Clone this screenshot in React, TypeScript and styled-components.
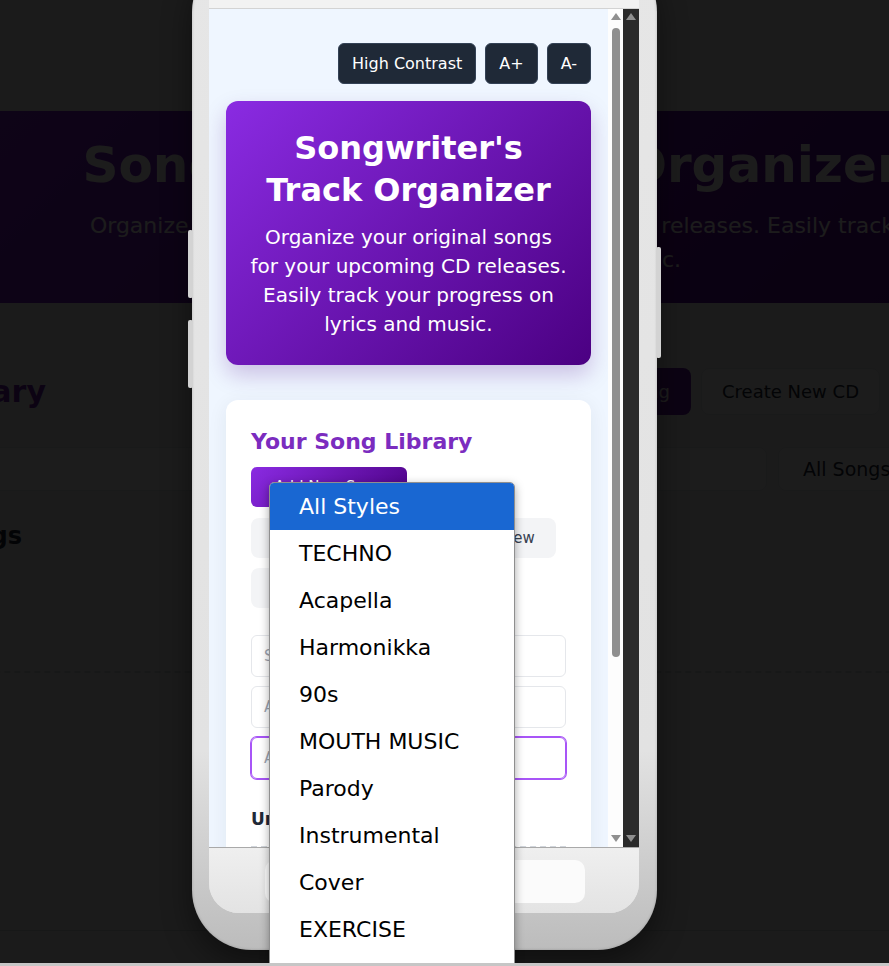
import React from "react";
import styled, { createGlobalStyle } from "styled-components";

const GlobalStyle = createGlobalStyle`
  html, body { margin: 0; padding: 0; background: #1b1b1b; }
  body { font-family: "DejaVu Sans", "Noto Sans", sans-serif; overflow: hidden; }
  *, *::before, *::after { box-sizing: border-box; }
  button, input, select { font-family: inherit; }
`;

const Stage = styled.div`
  width: 889px;
  height: 966px;
  display: flex;
  flex-direction: column;
  overflow: hidden;
`;

const Window = styled.div`
  position: relative;
  flex: 1;
  overflow: hidden;
`;

const HScrollbar = styled.div`
  height: 3px;
  background: #c6c6c6;
`;

/* the desktop page sitting behind the preview overlay */
const BgPage = styled.div`
  width: 1500px;
  margin-left: -258px;
  min-height: 100%;
  background: #f5f5f5;
  color: #1f2937;
`;

const BgTopBar = styled.div`
  height: 111px;
`;

const BgHeader = styled.header`
  height: 192px;
  padding-top: 24px;
  text-align: center;
  color: #fff;
  background: linear-gradient(135deg, #8a2be2 0%, #4b0082 100%);
`;

const BgTitle = styled.h1`
  margin: 0;
  font-size: 50px;
  line-height: 60px;
  font-weight: 700;
`;

const BgLead = styled.p`
  margin: 14px auto 0;
  max-width: 850px;
  font-size: 22px;
  line-height: 34px;
`;

const BgMain = styled.main`
  padding: 65px 0 0 2px;
`;

const BgSectionHead = styled.div`
  width: 1136px;
  display: flex;
  align-items: center;
  justify-content: space-between;
`;

const BgHeading = styled.h2`
  margin: 0;
  font-size: 30px;
  color: #6b21a8;
`;

const BgActions = styled.div`
  display: flex;
  gap: 10px;
`;

const BgButton = styled.button<{ $primary?: boolean }>`
  height: 47px;
  padding: 0 20px;
  border-radius: 8px;
  font-size: 18px;
  border: 1px solid ${(p) => (p.$primary ? "transparent" : "#e5e7eb")};
  background: ${(p) => (p.$primary ? "#6b21a8" : "#f9fafb")};
  color: ${(p) => (p.$primary ? "#fff" : "#1f2937")};
`;

const BgFilters = styled.div`
  width: 1290px;
  margin-top: 32px;
  display: flex;
  gap: 11px;
`;

const BgField = styled.div<{ $width?: number }>`
  height: 44px;
  flex: ${(p) => (p.$width ? `0 0 ${p.$width}px` : "1")};
  border: 1px solid #e5e7eb;
  border-radius: 8px;
  background: #fff;
  display: flex;
  align-items: center;
  padding-left: 24px;
  font-size: 19px;
`;

const BgSubHeading = styled.h3`
  margin: 30px 0 0 30px;
  font-size: 24px;
  line-height: 30px;
`;

const BgDropZone = styled.div`
  height: 122px;
  border-bottom: 2px dashed #d1d5db;
`;

const BgLowerSection = styled.section`
  margin-top: 64px;
  height: 194px;
  background: #f3f4f6;
  border-bottom: 1px solid #d1d5db;
`;

/* preview overlay */
const Overlay = styled.div`
  position: absolute;
  inset: 0;
  background: rgba(0, 0, 0, 0.89);
  display: flex;
  align-items: flex-end;
  padding: 0 0 13px 192px;
`;

const Phone = styled.div`
  position: relative;
  flex: none;
  width: 465px;
  padding: 17px 18px 37px 17px;
  border-radius: 60px;
  background: linear-gradient(180deg, #e6e6e6 0%, #e2e2e2 80%, #bcbcbc 100%);
  box-shadow: inset 0 0 3px rgba(0, 0, 0, 0.2), 0 12px 30px rgba(0, 0, 0, 0.45);
`;

const SideKey = styled.span<{ $right?: boolean; $top: number; $height: number }>`
  position: absolute;
  top: ${(p) => p.$top}px;
  ${(p) => (p.$right ? "right: -4px;" : "left: -4px;")}
  width: 5px;
  height: ${(p) => p.$height}px;
  background: #d3d3d3;
  border-radius: 2px;
`;

const Screen = styled.div`
  border-radius: 30px;
  overflow: hidden;
  background: #e8e8e8;
`;

const StatusStrip = styled.div`
  height: 40px;
  background: #f2f2f2;
  border-bottom: 1px solid #d3d3d3;
`;

const Viewport = styled.div`
  height: 839px;
  display: flex;
  border-bottom: 1px solid #a9a9a9;
`;

const AppFrame = styled.div`
  flex: 1;
  display: flex;
  overflow: hidden;
  background: #eff6ff;
`;

const AppContent = styled.div`
  width: 399px;
  flex: none;
  padding: 34px 17px 0;
`;

const ScrollTrack = styled.div<{ $dark?: boolean }>`
  width: ${(p) => (p.$dark ? 16 : 15)}px;
  flex: none;
  display: flex;
  flex-direction: column;
  align-items: center;
  padding: 4px 0 5px;
  background: ${(p) => (p.$dark ? "#2b2b2b" : "#fdfdfd")};
`;

const Arrow = styled.span<{ $down?: boolean }>`
  width: 0;
  height: 0;
  border-left: 5px solid transparent;
  border-right: 5px solid transparent;
  ${(p) => (p.$down ? "border-top: 7px solid #8f8f8f;" : "border-bottom: 7px solid #8f8f8f;")}
  ${(p) => (p.$down ? "margin-top: auto;" : "")}
`;

const Thumb = styled.span`
  width: 8px;
  height: 629px;
  margin-top: 8px;
  border-radius: 4px;
  background: #8f8f8f;
`;

const Chin = styled.div`
  height: 65px;
  padding: 12px 54px 10px 56px;
  background: linear-gradient(180deg, #efefef, #e3e3e3);
`;

const HomePill = styled.div`
  height: 43px;
  border-radius: 10px;
  background: #fbfbfb;
`;

/* app inside the phone */
const A11yBar = styled.div`
  display: flex;
  justify-content: flex-end;
  gap: 9px;
`;

const A11yButton = styled.button`
  height: 41px;
  padding: 0 13px;
  border: 1px solid #334155;
  border-radius: 6px;
  background: #1f2937;
  color: #fff;
  font-size: 16px;
`;

const Hero = styled.header`
  margin-top: 17px;
  height: 264px;
  padding: 26px 16px 0;
  border-radius: 12px;
  text-align: center;
  color: #fff;
  background: linear-gradient(135deg, #8a2be2 0%, #4b0082 100%);
  box-shadow: 0 10px 22px rgba(75, 0, 130, 0.22);
`;

const HeroTitle = styled.h1`
  margin: 0;
  font-size: 32px;
  line-height: 42px;
  font-weight: 700;
`;

const HeroLead = styled.p`
  margin: 12px auto 0;
  max-width: 319px;
  font-size: 20px;
  line-height: 29px;
`;

const Card = styled.section`
  margin-top: 35px;
  padding: 27px 25px 0;
  border-radius: 12px;
  background: #fff;
  box-shadow: 0 4px 20px rgba(30, 41, 59, 0.07);
  height: 600px;
`;

const CardTitle = styled.h2`
  margin: 0;
  font-size: 22px;
  line-height: 30px;
  color: #7b2cbf;
`;

const AddButton = styled.button`
  margin-top: 10px;
  width: 156px;
  height: 40px;
  border: none;
  border-radius: 6px;
  color: #fff;
  font-size: 15px;
  background: linear-gradient(135deg, #8a2be2 0%, #4b0082 100%);
`;

const ViewTabs = styled.div`
  margin-top: 11px;
  width: 310px;
  display: flex;
  flex-wrap: wrap;
  gap: 10px;
`;

const ViewTab = styled.button`
  height: 40px;
  padding: 0 21px;
  border: none;
  border-radius: 8px;
  background: #f3f4f6;
  color: #374151;
  font-size: 15px;
`;

const Fields = styled.div`
  margin-top: 27px;
  display: flex;
  flex-direction: column;
  gap: 9px;
`;

const Field = styled.div<{ $focused?: boolean }>`
  height: 42px;
  display: flex;
  align-items: center;
  padding-left: 12px;
  border: 1px solid ${(p) => (p.$focused ? "#a855f7" : "#e5e7eb")};
  box-shadow: ${(p) => (p.$focused ? "0 0 0 1px #a855f7" : "none")};
  border-radius: 6px;
  color: #9ca3af;
  font-size: 15px;
`;

const GroupTitle = styled.h3`
  margin: 29px 0 0;
  font-size: 17px;
  line-height: 22px;
  color: #1f2937;
`;

const GroupBody = styled.div`
  margin-top: 16px;
  border-top: 2px dashed #d1d5db;
`;

/* open native select list */
const StylePopup = styled.ul`
  position: absolute;
  left: 269px;
  top: 482px;
  z-index: 3;
  width: 246px;
  margin: 0;
  padding: 0;
  list-style: none;
  background: #fff;
  border: 1px solid #8f8f8f;
  border-radius: 5px 5px 0 0;
  overflow: hidden;
  box-shadow: 0 3px 10px rgba(0, 0, 0, 0.35);
  font-size: 22px;
`;

const StyleOption = styled.li<{ $active?: boolean }>`
  height: 47px;
  display: flex;
  align-items: center;
  padding-left: 29px;
  background: ${(p) => (p.$active ? "#1967d2" : "#fff")};
  color: ${(p) => (p.$active ? "#fff" : "#000")};
`;

const styles = [
  "All Styles",
  "TECHNO",
  "Acapella",
  "Harmonikka",
  "90s",
  "MOUTH MUSIC",
  "Parody",
  "Instrumental",
  "Cover",
  "EXERCISE",
  "Ballad",
];

export default function App() {
  return (
    <>
      <GlobalStyle />
      <Stage>
        <Window>
          <BgPage>
            <BgTopBar />
            <BgHeader>
              <BgTitle>Songwriter's Track Organizer</BgTitle>
              <BgLead>
                Organize your original songs for your upcoming CD releases. Easily track your
                progress on lyrics and music.
              </BgLead>
            </BgHeader>
            <BgMain>
              <BgSectionHead>
                <BgHeading>Your Song Library</BgHeading>
                <BgActions>
                  <BgButton $primary>Add New Song</BgButton>
                  <BgButton>Create New CD</BgButton>
                </BgActions>
              </BgSectionHead>
              <BgFilters>
                <BgField>Search songs...</BgField>
                <BgField $width={256}>All Songs</BgField>
              </BgFilters>
              <BgSubHeading>Unassigned Songs</BgSubHeading>
              <BgDropZone />
            </BgMain>
            <BgLowerSection />
          </BgPage>

          <Overlay>
            <Phone>
              <SideKey $top={278} $height={68} />
              <SideKey $top={368} $height={68} />
              <SideKey $right $top={295} $height={111} />
              <Screen>
                <StatusStrip />
                <Viewport>
                  <AppFrame>
                    <AppContent>
                      <A11yBar>
                        <A11yButton>High Contrast</A11yButton>
                        <A11yButton>A+</A11yButton>
                        <A11yButton>A-</A11yButton>
                      </A11yBar>
                      <Hero>
                        <HeroTitle>Songwriter's Track Organizer</HeroTitle>
                        <HeroLead>
                          Organize your original songs for your upcoming CD releases. Easily
                          track your progress on lyrics and music.
                        </HeroLead>
                      </Hero>
                      <Card>
                        <CardTitle>Your Song Library</CardTitle>
                        <AddButton>Add New Song</AddButton>
                        <ViewTabs>
                          <ViewTab>Compact View</ViewTab>
                          <ViewTab>Detailed View</ViewTab>
                          <ViewTab>Songs by Style</ViewTab>
                        </ViewTabs>
                        <Fields>
                          <Field>Search songs...</Field>
                          <Field>All Songs</Field>
                          <Field $focused>All Styles</Field>
                        </Fields>
                        <GroupTitle>Unassigned Songs</GroupTitle>
                        <GroupBody />
                      </Card>
                    </AppContent>
                    <ScrollTrack>
                      <Arrow />
                      <Thumb />
                      <Arrow $down />
                    </ScrollTrack>
                  </AppFrame>
                  <ScrollTrack $dark>
                    <Arrow />
                    <Arrow $down />
                  </ScrollTrack>
                </Viewport>
                <Chin>
                  <HomePill />
                </Chin>
              </Screen>
            </Phone>
          </Overlay>

          <StylePopup>
            {styles.map((s, i) => (
              <StyleOption key={s} $active={i === 0}>
                {s}
              </StyleOption>
            ))}
          </StylePopup>
        </Window>
        <HScrollbar />
      </Stage>
    </>
  );
}
